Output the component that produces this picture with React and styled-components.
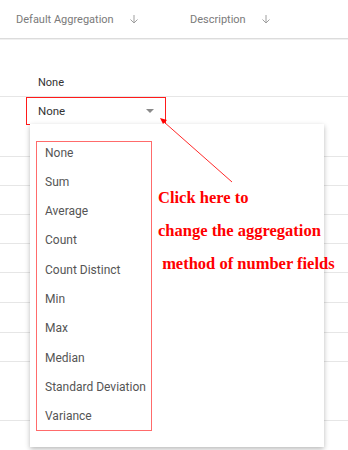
import React from 'react';
import styled, {createGlobalStyle} from 'styled-components';

const Global = createGlobalStyle`
  body {
    margin: 0;
    background: #ffffff;
    font-family: Roboto, "Liberation Sans", sans-serif;
  }
`

const Page = styled.div`
  position: relative;
  width: 348px;
  height: 450px;
  overflow: hidden;
  background: #fff;
`

const Header = styled.div`
  display: flex;
  align-items: center;
  height: 39px;
  padding-left: 16px;
  box-sizing: border-box;
  border-bottom: 1px solid #dcdcdc;
  box-shadow: 0 1px 0 #f0f0f0;
  color: #7a7a7a;
  font-size: 11px;
`

const HeadCell = styled.div`
  display: flex;
  align-items: center;
  width: ${p => p.w}px;
  gap: 14px;
`

const Row = styled.div`
  display: flex;
  align-items: ${p => p.bottom ? 'flex-end' : 'center'};
  height: ${p => p.h}px;
  box-sizing: border-box;
  border-bottom: ${p => p.noline ? 'none' : '1px solid #e6e6e6'};
  padding-left: ${p => p.indent || 0}px;
  padding-bottom: ${p => p.bottom ? 7 : 0}px;
  font-size: 11px;
  color: #333;
`

const Select = styled.div`
  display: flex;
  align-items: center;
  justify-content: space-between;
  box-sizing: border-box;
  width: 140px;
  height: 28px;
  margin-left: 26px;
  margin-top: -2px;
  padding: 0 11px 0 11px;
  border: 1.5px solid #ff1a1a;
  font-size: 11.5px;
  color: #333;
`

const Caret = styled.span`
  width: 0;
  height: 0;
  border-left: 4px solid transparent;
  border-right: 4px solid transparent;
  border-top: 4px solid #8a8a8a;
`

const Menu = styled.div`
  position: absolute;
  left: 30px;
  top: 124px;
  width: 294px;
  height: 323px;
  box-sizing: border-box;
  padding-top: 14.5px;
  background: #fff;
  box-shadow: 0 2px 5px rgba(0,0,0,0.28);
`

const List = styled.div`
  position: relative;
  display: flex;
  flex-direction: column;
  &::after {
    content: '';
    position: absolute;
    left: 6px;
    top: 2.5px;
    width: 116px;
    height: 290px;
    box-sizing: border-box;
    border: 1.5px solid #ff6b6b;
  }
`

const Item = styled.div`
  height: 29.3px;
  line-height: 29.3px;
  padding-left: 15px;
  font-size: 12px;
  color: #555;
`

const Note = styled.div`
  position: absolute;
  left: 158px;
  top: 188px;
  display: flex;
  flex-direction: column;
  gap: 13px;
  font-family: "Liberation Serif", serif;
  font-weight: bold;
  font-size: 16.5px;
  line-height: 20px;
  color: #ff0000;
  white-space: pre;
`

const Pointer = styled.svg`
  position: absolute;
  left: 0;
  top: 0;
  pointer-events: none;
`

const DownArrow = () => (
  <svg width="12" height="12" viewBox="0 0 24 24" fill="none" stroke="#9e9e9e" strokeWidth="2">
    <path d="M12 4v16M5 13l7 7 7-7"/>
  </svg>
)

const rows = [30, 29, 29, 29, 29, 30, 30, 29, 59]
const options = ['None', 'Sum', 'Average', 'Count', 'Count Distinct', 'Min', 'Max', 'Median', 'Standard Deviation', 'Variance']

export default function App() {
  return (
    <Page>
      <Global/>
      <Header>
        <HeadCell w={174}>Default Aggregation <DownArrow/></HeadCell>
        <HeadCell w={120}>Description <DownArrow/></HeadCell>
      </Header>
      <Row h={58} bottom indent={38}>None</Row>
      <Row h={30} noline>
        <Select>None<Caret/></Select>
      </Row>
      {rows.map((h, i) => <Row key={i} h={h}/>)}

      <Menu>
        <List>
          {options.map(o => <Item key={o}>{o}</Item>)}
        </List>
      </Menu>

      <Note>
        <span>Click here to</span>
        <span>change the aggregation</span>
        <span> method of number fields</span>
      </Note>

      <Pointer width="348" height="450">
        <line x1="232" y1="182" x2="164" y2="122" stroke="#ff2a2a" strokeWidth="1"/>
        <polygon points="160,118 167,120 163,124" fill="#ff0000"/>
      </Pointer>
    </Page>
  )
}
